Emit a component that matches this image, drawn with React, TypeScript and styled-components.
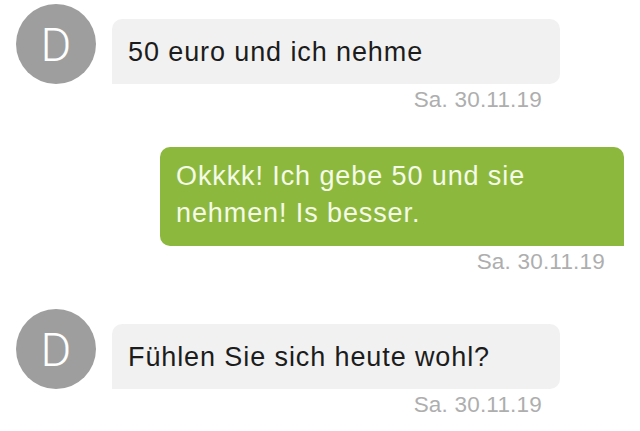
import React from 'react';
import styled, { createGlobalStyle } from 'styled-components';

const GlobalStyle = createGlobalStyle`
    body {
        margin: 0;
        background: #ffffff;
        font-family: "Liberation Sans", Arial, sans-serif;
    }
`;

const Thread = styled.div`
    display: flex;
    flex-direction: column;
    gap: 34px;
    padding: 4px 16px 0 16px;
`;

// incoming messages stop 64px short of the right edge, outgoing ones reach it
const Group = styled.div<{ out?: boolean }>`
    display: flex;
    flex-direction: column;
    align-items: flex-end;
    padding-right: ${(props) => (props.out ? '0' : '64px')};
`;

const Row = styled.div`
    display: flex;
    align-items: flex-end;
    gap: 16px;
    align-self: stretch;
`;

const Avatar = styled.div`
    width: 80px;
    height: 80px;
    flex: none;
    border-radius: 50%;
    background: #9e9e9e;
    color: #ffffff;
    display: flex;
    align-items: center;
    justify-content: center;
    font-family: Roboto, "Liberation Sans", sans-serif;
    font-weight: 300;
    font-size: 47px;
`;

const Bubble = styled.div<{ out?: boolean }>`
    box-sizing: border-box;
    width: ${(props) => (props.out ? '464px' : '448px')};
    padding: ${(props) => (props.out ? '11px 16px 14px' : '15px 16px 13px')};
    border-radius: ${(props) => (props.out ? '10px 10px 0 10px' : '10px 10px 10px 0')};
    background: ${(props) => (props.out ? '#8db83e' : '#f1f1f1')};
    color: ${(props) => (props.out ? '#f4fae6' : '#1c1c1c')};
    font-size: 27px;
    line-height: 37px;
    letter-spacing: 0.9px;
`;

const Stamp = styled.div<{ out?: boolean }>`
    margin-top: 3px;
    padding-right: ${(props) => (props.out ? '19px' : '18px')};
    color: #aeaeae;
    font-size: 22.5px;
    line-height: 26px;
    letter-spacing: 0.2px;
`;

type Msg = { text: string; date: string; out?: boolean };

const messages: Msg[] = [
    { text: '50 euro und ich nehme', date: 'Sa. 30.11.19' },
    { text: 'Okkkk! Ich gebe 50 und sie nehmen! Is besser.', date: 'Sa. 30.11.19', out: true },
    { text: 'Fühlen Sie sich heute wohl?', date: 'Sa. 30.11.19' },
];

const App = () => (
    <>
        <GlobalStyle />
        <Thread>
            {messages.map((m, i) => (
                <Group key={i} out={m.out}>
                    {m.out ? (
                        <Bubble out>{m.text}</Bubble>
                    ) : (
                        <Row>
                            <Avatar>D</Avatar>
                            <Bubble>{m.text}</Bubble>
                        </Row>
                    )}
                    <Stamp out={m.out}>{m.date}</Stamp>
                </Group>
            ))}
        </Thread>
    </>
);

export default App;
